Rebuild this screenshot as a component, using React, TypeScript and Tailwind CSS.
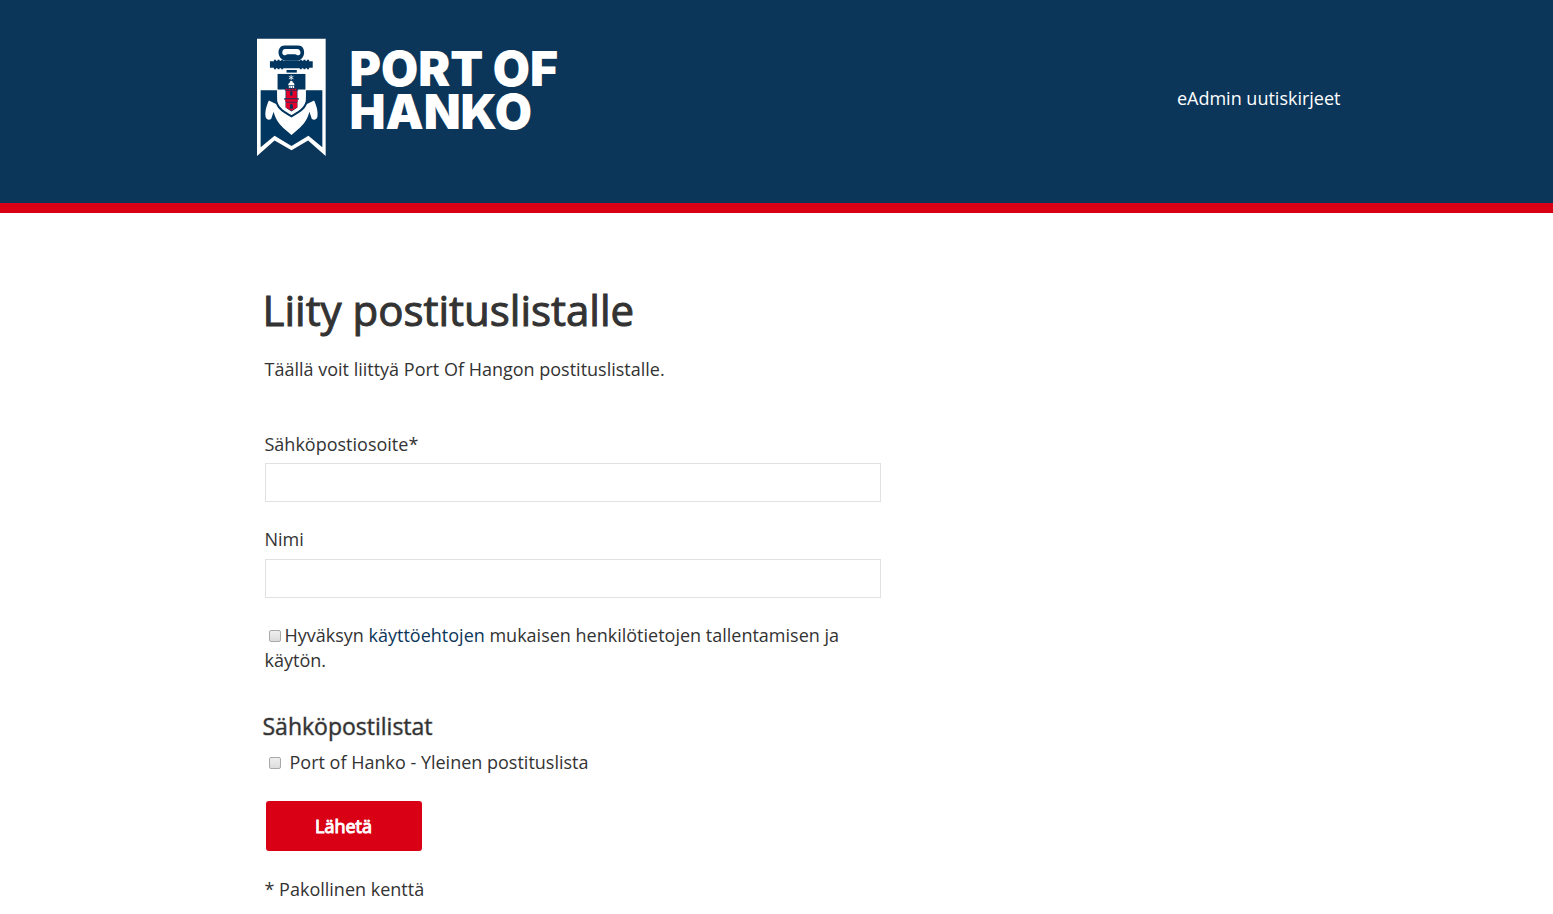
import React, { useState } from 'react'

const checkboxClass =
  "m-0 h-3 w-3 shrink-0 appearance-none rounded-[2px] border border-[#a9a9a9] bg-linear-to-b from-[#efefef] to-[#dcdcdc] checked:bg-none checked:bg-[#d90016]"

const Emblem = () => (
  <svg viewBox="36 24 208 355" className="h-[118px] w-[69px]" aria-hidden="true">
    <path d="M36 26H243V379L190 333 140 362 89 333 36 379Z" fill="#fff" />
    <path d="M47 181H233V353L191 318 140 349 89 318 47 353Z" fill="#00365f" />
    {/* shackle and stock */}
    <path
      fillRule="evenodd"
      fill="#00365f"
      d="M119 46H160C173 46 179 56 178 70 177 80 170 88 160 92H120C109 88 102 80 101 70 100 56 107 46 119 46ZM122 57C115 57 112 62 112 69 113 74 116 76 121 76L128 73H151L158 76C164 76 167 74 167 68 167 62 163 57 157 57Z"
    />
    <path d="M80 94H87V89H93V92H98V89H104V92H109V89H115V92H165V89H171V92H176V89H182V92H187V89H193V94H204V113H193V118H187V115H182V118H176V115H171V118H165V115H115V118H109V115H104V118H98V115H93V118H87V113H75V94Z" fill="#00365f" />
    <path d="M125 120H156V128H125Z" fill="#00365f" />
    {/* anchor arms */}
    <path
      fill="#fff"
      d="M97 181H183V232L179 226 208 212C214 224 221 244 218 262 215 270 207 273 201 267L194 246C186 278 167 293 154 304L140 316 126 304C113 293 94 278 86 246L79 267C73 273 65 270 62 262 59 244 66 224 72 212L101 226 97 232Z"
    />
    <path d="M97 215C103 235 121 245 140 256 159 245 177 235 183 215L187 221C181 241 160 251 140 263 120 251 99 241 93 221Z" fill="#00365f" />
    {/* shield */}
    <path d="M97 132H183V198C183 224 163 242 140 255 117 242 97 224 97 198Z" fill="#fff" />
    <path d="M98 132H182V179H98Z" fill="#00365f" />
    {/* lighthouse */}
    <path d="M139 135V151M132 139L146 147M132 147L146 139" stroke="#fff" strokeWidth="2.5" />
    <path d="M136 153H143V157C148 159 149 162 149 166H130C130 162 132 159 136 157Z" fill="#fff" />
    <path d="M132 168H148V178H132Z" fill="#fff" />
    <path d="M136 169V178M143 169V178" stroke="#00365f" strokeWidth="2" />
    <path d="M120 174H160V182H158V205H162V210H158V233L140 245 122 233V210H118V205H122V182H120Z" fill="#00365f" />
    <path d="M124 183H156V205H124ZM121 208H159V216H121ZM123 218H157V233L140 243 123 233Z" fill="#e4002b" />
    <path d="M136 184H143V197H136ZM135 237V227Q139 215 144 227V237Z" fill="#00365f" />
    <path d="M122 179H158" stroke="#e4002b" strokeWidth="4" strokeDasharray="6 3" />
  </svg>
)

const App = () => {
  const [email, setEmail] = useState('')
  const [name, setName] = useState('')

  return (
    <div className="min-h-screen bg-white font-['Open_Sans',sans-serif] text-[18px] leading-[25px] font-normal text-[#333]">
      <header className="border-b-[10px] border-[#d90016] bg-[#0c3659]">
        <div className="mx-auto flex max-w-[1128px] items-start justify-between pt-[38px] pb-[47px] pl-11">
          <a href="#" className="flex items-start gap-6 text-white">
            <Emblem />
            <span className="flex flex-col pt-[9px] font-[Inter,sans-serif] text-[48px] leading-[43px] font-black">
              <span>PORT OF</span>
              <span>HANKO</span>
            </span>
          </a>
          <a href="#" className="pt-12 text-white">eAdmin uutiskirjeet</a>
        </div>
      </header>

      <main className="mx-auto max-w-[1128px] pt-[69px] pb-3 pl-[52px]">
        <h1 className="-ml-0.5 text-[42px] leading-[56px] [-webkit-text-stroke:1px_#333]">Liity postituslistalle</h1>
        <p className="mt-[19px]">Täällä voit liittyä Port Of Hangon postituslistalle.</p>

        <form className="mt-[50px] max-w-[616px]" onSubmit={(e) => e.preventDefault()}>
          <label htmlFor="email" className="block">Sähköpostiosoite*</label>
          <input
            id="email"
            type="email"
            value={email}
            onChange={(e) => setEmail(e.target.value)}
            className="mt-[6px] block h-[39px] w-full border border-[#e2e2e2] px-3"
          />
          <label htmlFor="name" className="mt-[25px] block">Nimi</label>
          <input
            id="name"
            type="text"
            value={name}
            onChange={(e) => setName(e.target.value)}
            className="mt-[7px] block h-[39px] w-full border border-[#e2e2e2] px-3"
          />
          <div className="mt-[25px]">
            <input id="terms" type="checkbox" className={`${checkboxClass} mr-1 ml-1`} />
            <label htmlFor="terms">
              Hyväksyn <a href="#" className="text-[#0c3659]">käyttöehtojen</a> mukaisen henkilötietojen tallentamisen ja käytön.
            </label>
          </div>

          <h2 className="mt-[38px] -ml-0.5 text-[23px] leading-[30px] [-webkit-text-stroke:1px_#33333370]">Sähköpostilistat</h2>
          <div className="mt-[9px] flex items-center gap-[9px] pl-1">
            <input id="general" type="checkbox" className={checkboxClass} />
            <label htmlFor="general">Port of Hanko - Yleinen postituslista</label>
          </div>

          <button type="submit" className="mt-[26px] ml-px block h-[50px] w-[156px] rounded-[3px] bg-[#d90016] text-white [-webkit-text-stroke:1px_#fff]">
            Lähetä
          </button>
        </form>
        <p className="mt-[26px]">* Pakollinen kenttä</p>
      </main>
    </div>
  )
}

export default App
